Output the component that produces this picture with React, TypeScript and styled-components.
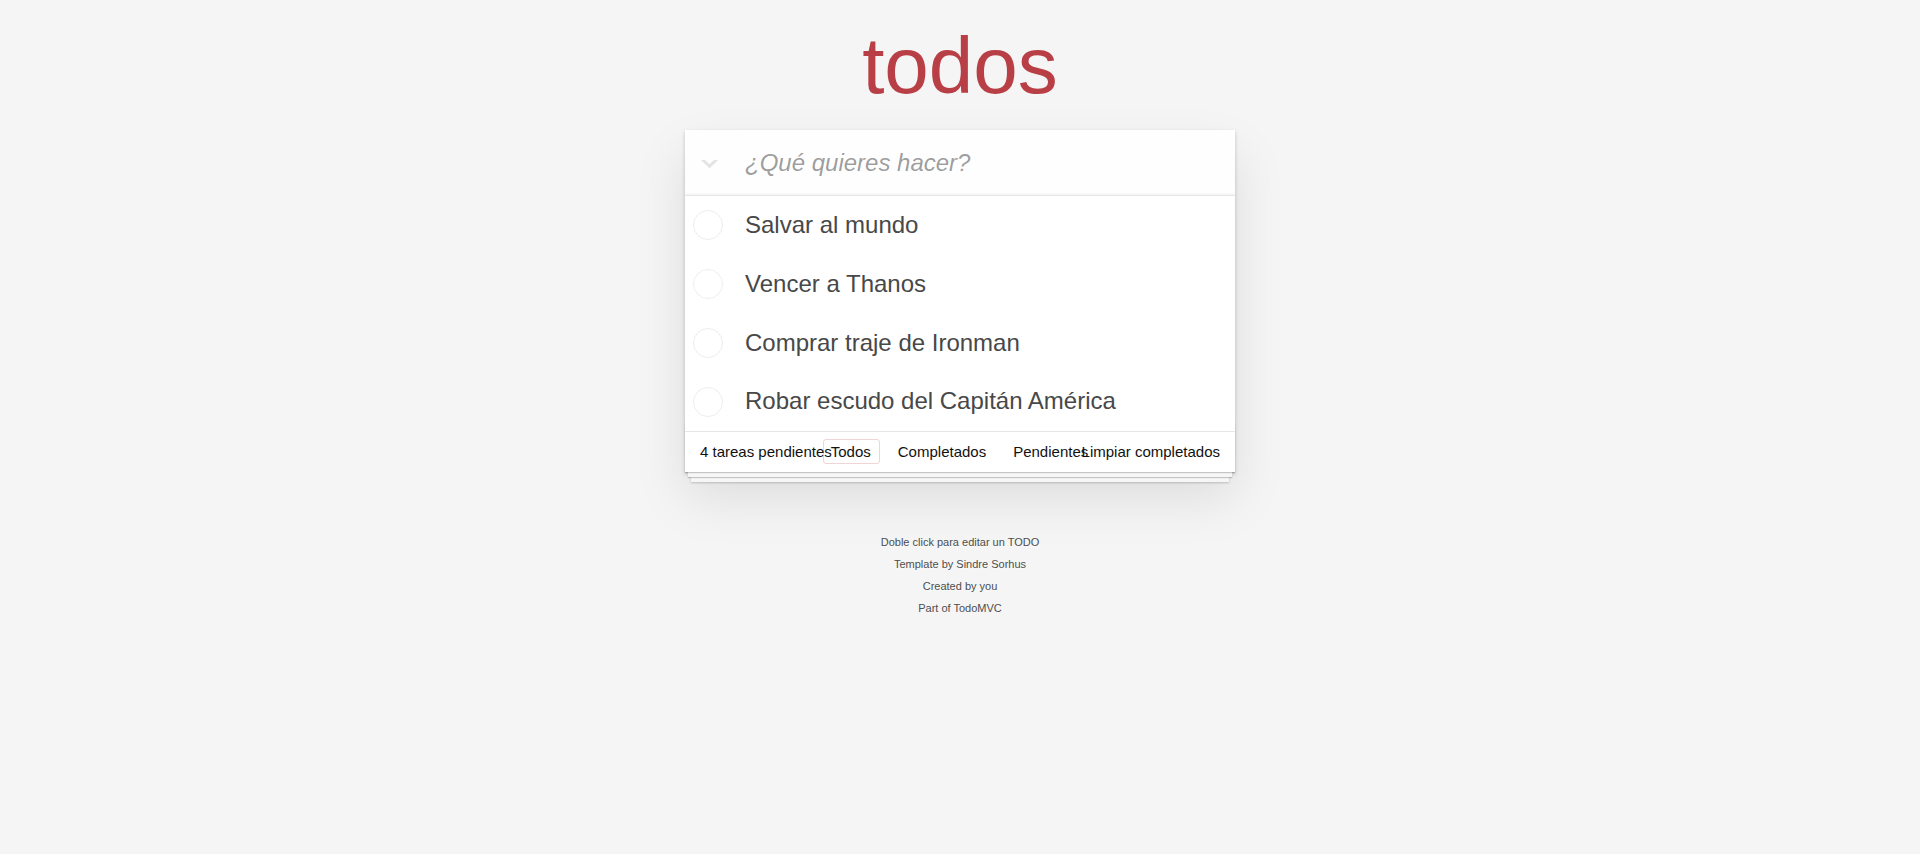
import React from "react";
import styled, { createGlobalStyle } from "styled-components";

const GlobalStyle = createGlobalStyle`
  html,
  body {
    margin: 0;
    padding: 0;
  }

  body {
    background: #f5f5f5;
    font-family: "Liberation Sans", Arial, sans-serif;
    font-size: 14px;
    line-height: 1.4em;
    color: #111111;
    -webkit-font-smoothing: antialiased;
  }
`;

const Page = styled.div`
  max-width: 550px;
  min-width: 230px;
  margin: 0 auto;
`;

const Title = styled.h1`
  margin: 0;
  padding: 26px 0 24px;
  font-size: 80px;
  line-height: 80px;
  font-weight: 400;
  text-align: center;
  color: #b83f45;
`;

const TodoApp = styled.section`
  background: #ffffff;
  margin: 0 0 40px 0;
  position: relative;
  box-shadow: 0 2px 4px 0 rgba(0, 0, 0, 0.2), 0 25px 50px 0 rgba(0, 0, 0, 0.1);
`;

const Header = styled.header`
  display: flex;
  height: 65px;
  background: rgba(0, 0, 0, 0.003);
  box-shadow: inset 0 -2px 1px rgba(0, 0, 0, 0.03);
`;

const ToggleAll = styled.label`
  width: 60px;
  flex: none;
  box-sizing: border-box;
  display: flex;
  align-items: center;
  padding: 4px 0 0 16px;
  cursor: pointer;

  svg {
    display: block;
  }
`;

const NewTodo = styled.input`
  flex: 1;
  min-width: 0;
  height: 100%;
  box-sizing: border-box;
  margin: 0;
  padding: 16px 16px 16px 0;
  border: none;
  outline: none;
  background: transparent;
  font-family: inherit;
  font-size: 24px;
  line-height: 1.4em;
  color: #4d4d4d;

  &::placeholder {
    font-style: italic;
    font-weight: 400;
    color: rgba(0, 0, 0, 0.4);
  }
`;

const Main = styled.section`
  border-top: 1px solid #e6e6e6;
`;

const TodoList = styled.ul`
  margin: 0;
  padding: 0;
  list-style: none;
`;

const TodoItem = styled.li`
  display: flex;
  align-items: center;
  font-size: 24px;
`;

const Toggle = styled.span`
  width: 60px;
  flex: none;
  box-sizing: border-box;
  padding-left: 8px;
  display: flex;
  align-items: center;

  svg {
    display: block;
  }
`;

const ItemLabel = styled.label`
  flex: 1;
  padding: 15px 15px 15px 0;
  line-height: 1.2;
  color: #484848;
  word-break: break-all;
`;

const Footer = styled.footer`
  position: relative;
  display: grid;
  grid-template-areas: "stack";
  height: 20px;
  padding: 10px 15px;
  border-top: 1px solid #e6e6e6;
  font-size: 15px;
  line-height: 19.6px;
  color: #111111;

  & > * {
    grid-area: stack;
  }

  &::before {
    content: "";
    position: absolute;
    right: 0;
    bottom: 0;
    left: 0;
    height: 50px;
    overflow: hidden;
    pointer-events: none;
    box-shadow: 0 1px 1px rgba(0, 0, 0, 0.2), 0 8px 0 -3px #f6f6f6,
      0 9px 1px -3px rgba(0, 0, 0, 0.2), 0 16px 0 -6px #f6f6f6,
      0 17px 2px -6px rgba(0, 0, 0, 0.2);
  }
`;

const TodoCount = styled.span`
  justify-self: start;
  white-space: nowrap;
`;

const Filters = styled.ul`
  justify-self: center;
  display: flex;
  gap: 4px;
  margin: 0;
  padding: 0;
  list-style: none;
  white-space: nowrap;
`;

const FilterLink = styled.a<{ $selected?: boolean }>`
  color: inherit;
  margin: 3px;
  padding: 3px 8px 3px 7px;
  text-decoration: none;
  border: 1px solid
    ${(p) => (p.$selected ? "rgba(175, 47, 47, 0.2)" : "transparent")};
  border-radius: 3px;
  cursor: pointer;
`;

const ClearCompleted = styled.button`
  justify-self: end;
  margin: 0;
  padding: 0;
  border: 0;
  background: none;
  font-family: inherit;
  font-size: 15px;
  line-height: 20px;
  color: inherit;
  white-space: nowrap;
  cursor: pointer;
`;

const Info = styled.footer`
  margin: 65px auto 0;
  color: #4d4d4d;
  font-size: 11px;
  text-shadow: 0 1px 0 rgba(255, 255, 255, 0.5);
  text-align: center;

  p {
    margin: 11px 0;
    line-height: 1;
  }

  a {
    color: inherit;
    text-decoration: none;
  }
`;

const Chevron = () => (
  <svg width="17" height="9" viewBox="0 0 17 9">
    <polygon points="0,0 4,0 8.5,4.3 13,0 17,0 8.5,8.2" fill="#e3e3e3" />
  </svg>
);

const Circle = () => (
  <svg width="30" height="30" viewBox="0 0 30 30">
    <circle cx="15" cy="15" r="14.5" fill="none" stroke="#ededed" strokeWidth="1" />
  </svg>
);

const todos = [
  "Salvar al mundo",
  "Vencer a Thanos",
  "Comprar traje de Ironman",
  "Robar escudo del Capitán América",
];

const filters = [
  { label: "Todos", selected: true },
  { label: "Completados" },
  { label: "Pendientes" },
];

export default function App() {
  return (
    <>
      <GlobalStyle />
      <Page>
        <Title>todos</Title>
        <TodoApp>
          <Header>
            <ToggleAll>
              <Chevron />
            </ToggleAll>
            <NewTodo placeholder="¿Qué quieres hacer?" />
          </Header>
          <Main>
            <TodoList>
              {todos.map((t) => (
                <TodoItem key={t}>
                  <Toggle>
                    <Circle />
                  </Toggle>
                  <ItemLabel>{t}</ItemLabel>
                </TodoItem>
              ))}
            </TodoList>
          </Main>
          <Footer>
            <TodoCount>{todos.length} tareas pendientes</TodoCount>
            <Filters>
              {filters.map((f) => (
                <li key={f.label}>
                  <FilterLink $selected={f.selected}>{f.label}</FilterLink>
                </li>
              ))}
            </Filters>
            <ClearCompleted>Limpiar completados</ClearCompleted>
          </Footer>
        </TodoApp>
        <Info>
          <p>Doble click para editar un TODO</p>
          <p>
            Template by <a>Sindre Sorhus</a>
          </p>
          <p>
            Created by <a>you</a>
          </p>
          <p>
            Part of <a>TodoMVC</a>
          </p>
        </Info>
      </Page>
    </>
  );
}
